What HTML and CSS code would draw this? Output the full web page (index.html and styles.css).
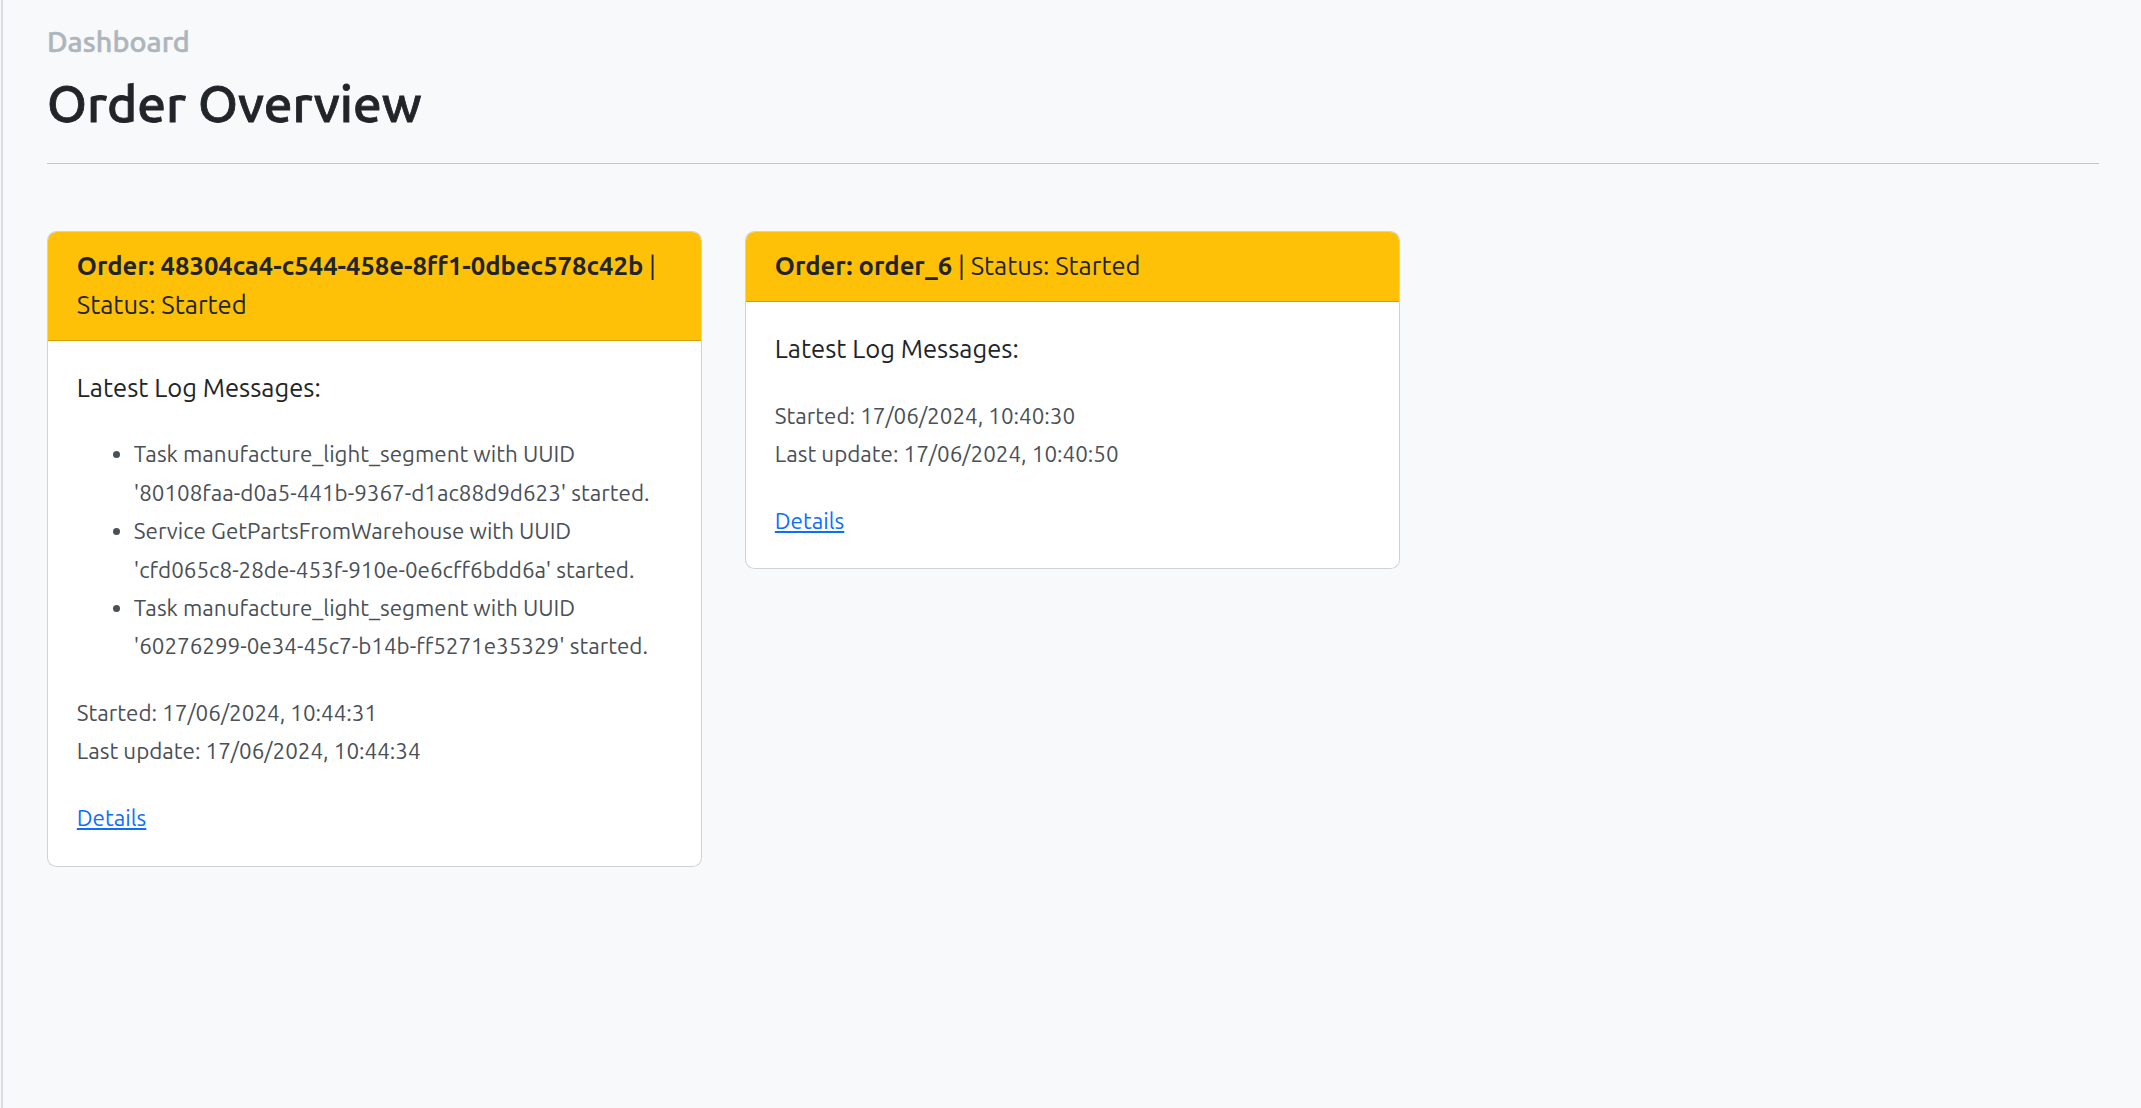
FILE: index.html
```html
<!DOCTYPE html>
<html lang="en">
<head>
<meta charset="utf-8">
<title>Order Overview</title>
<link rel="stylesheet" href="styles.css">
</head>
<body>
<div class="frame">
  <main class="page">
    <p class="crumb">Dashboard</p>
    <h1 class="title">Order Overview</h1>
    <hr class="rule">
    <section class="cards">
      <article class="card">
        <header class="card-header"><strong>Order: 48304ca4-c544-458e-8ff1-0dbec578c42b</strong> | Status: Started</header>
        <div class="card-body">
          <h5 class="log-title">Latest Log Messages:</h5>
          <ul class="log-list">
            <li>Task manufacture_light_segment with UUID '80108faa-d0a5-441b-9367-d1ac88d9d623' started.</li>
            <li>Service GetPartsFromWarehouse with UUID 'cfd065c8-28de-453f-910e-0e6cff6bdd6a' started.</li>
            <li>Task manufacture_light_segment with UUID '60276299-0e34-45c7-b14b-ff5271e35329' started.</li>
          </ul>
          <p class="meta">Started: 17/06/2024, 10:44:31<br>Last update: 17/06/2024, 10:44:34</p>
          <p class="links"><a href="#" class="details">Details</a></p>
        </div>
      </article>
      <article class="card">
        <header class="card-header"><strong>Order: order_6</strong> | Status: Started</header>
        <div class="card-body">
          <h5 class="log-title">Latest Log Messages:</h5>
          <p class="meta">Started: 17/06/2024, 10:40:30<br>Last update: 17/06/2024, 10:40:50</p>
          <p class="links"><a href="#" class="details">Details</a></p>
        </div>
      </article>
    </section>
  </main>
</div>
</body>
</html>
```
FILE: styles.css
```css
html, body {
  margin: 0;
  padding: 0;
  background: #f8f9fa;
}
body {
  font-family: "Ubuntu", Roboto, "Liberation Sans", sans-serif;
  color: #212529;
}
.frame {
  min-height: 1108px;
  margin-left: 1px;
  border-left: 2px solid #dcdde0;
  box-sizing: border-box;
}
.page {
  padding: 24px 42px 0 44px;
}
.crumb {
  margin: 0 0 14.7px;
  font-family: "Ubuntu Medium", "Ubuntu", Roboto, sans-serif;
  font-size: 28.8px;
  font-weight: 500;
  line-height: 1.2;
  color: #adb5bd;
  -webkit-text-stroke: 0.5px currentColor;
}
.title {
  margin: 0 0 28.3px;
  font-family: "Ubuntu Medium", "Ubuntu", Roboto, sans-serif;
  font-size: 51.2px;
  font-weight: 500;
  line-height: 1.2;
  color: #212529;
  -webkit-text-stroke: 0.8px currentColor;
}
.rule {
  margin: 0 0 67px;
  border: 0;
  border-top: 1px solid #c5c6c8;
  height: 0;
}
.cards {
  display: flex;
  align-items: flex-start;
  gap: 43px;
}
.card {
  width: 655px;
  box-sizing: border-box;
  background: #fff;
  border: 1px solid rgba(0, 0, 0, 0.175);
  border-radius: 9.6px;
}
.card-header {
  padding: 15.36px 28.8px;
  background: #ffc107;
  border-bottom: 1px solid rgba(0, 0, 0, 0.175);
  border-radius: 8.6px 8.6px 0 0;
  font-size: 25.6px;
  line-height: 38.4px;
  color: #212529;
}
.card-header strong {
  font-weight: 700;
}
.card-body {
  padding: 28.2px 28.8px;
}
.log-title {
  margin: 0 0 28.2px;
  font-size: 25.6px;
  font-weight: 400;
  line-height: 38.4px;
  color: #212529;
}
.log-list {
  margin: 0 0 28.2px;
  padding-left: 57px;
  font-size: 22.4px;
  line-height: 38.4px;
  color: #495057;
}
.meta {
  margin: 0 0 28.2px;
  font-size: 22.4px;
  line-height: 38.4px;
  color: #495057;
}
.links {
  margin: 0;
  font-size: 22.4px;
  line-height: 38.4px;
}
.details {
  color: #0d6efd;
  text-decoration: underline;
}
```
